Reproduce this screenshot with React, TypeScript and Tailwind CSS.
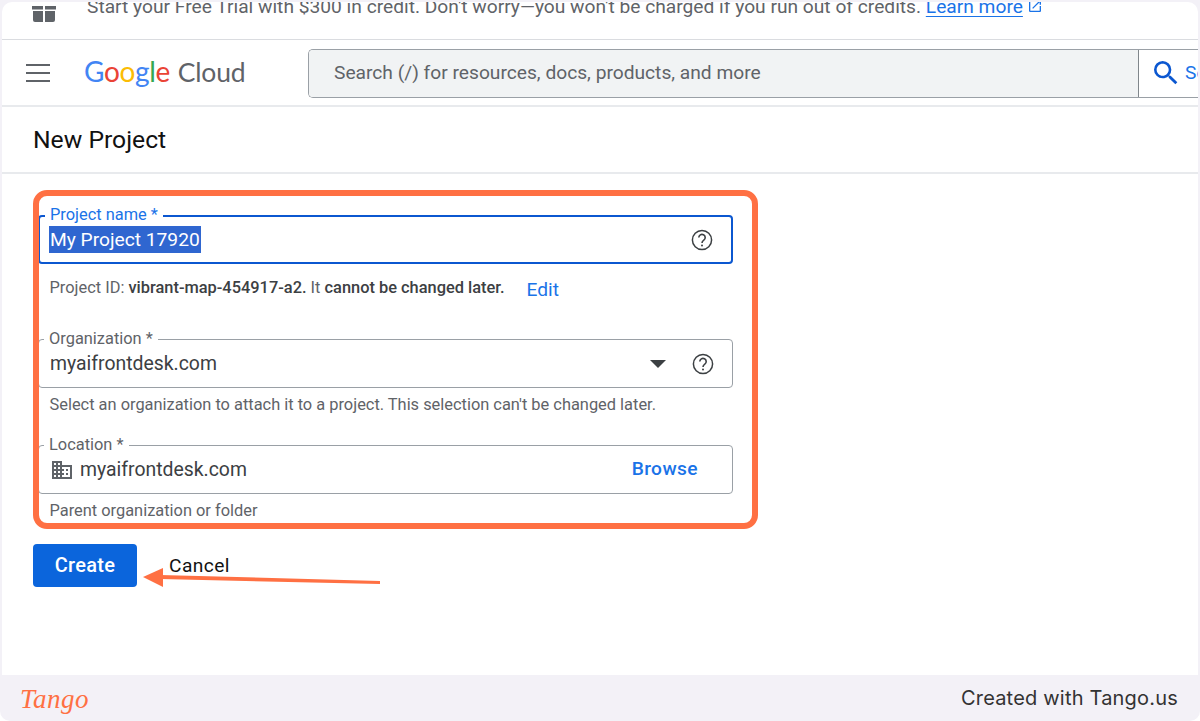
import React from "react";

function HelpIcon({ className }: { className?: string }) {
  return (
    <svg viewBox="0 0 24 24" className={className} fill="none" stroke="currentColor">
      <circle cx="12" cy="12" r="9.6" strokeWidth="1.5" />
      <path d="M8.8 9.6a3.2 3.2 0 1 1 5 2.6c-1.1.8-1.8 1.4-1.8 2.8" strokeWidth="1.6" />
      <circle cx="12" cy="17.4" r="1" fill="currentColor" stroke="none" />
    </svg>
  );
}

function Field({
  label,
  focused,
  children,
}: {
  label: string;
  focused?: boolean;
  children: React.ReactNode;
}) {
  return (
    <div
      className={`relative h-[49px] w-[695px] rounded-[4px] flex items-center pr-[17px] ${
        focused ? "border-2 border-[#0b57d0] pl-[10px]" : "border border-[#9aa0a6] pl-[11px]"
      }`}
    >
      {/* floating label sits on the outline */}
      <span
        className={`absolute left-[5px] bg-white px-[5px] text-[16.4px] leading-[18px] ${
          focused ? "top-[-11px] text-[#1a73e8]" : "top-[-10px] text-[#5f6368]"
        }`}
      >
        {label}
      </span>
      {children}
    </div>
  );
}

export default function App() {
  return (
    <div className="relative w-[1200px] h-[721px] overflow-hidden bg-white font-['Roboto',sans-serif]">
      <div className="h-full flex flex-col rounded-b-[10px] bg-[#f3f1f7] pt-[2px] px-[2px]">
        <div className="flex-1 min-h-0 bg-white rounded-t-[10px] flex flex-col overflow-hidden">
          {/* trial banner, scrolled so its top is cut off */}
          <div className="h-[38px] shrink-0 border-b border-[#dadce0] overflow-hidden pl-[30px]">
            <div className="h-[10px] flex items-center">
              <svg width="24" height="18" viewBox="0 0 24 18" className="shrink-0 mt-[16px] text-[#5f6368]" fill="currentColor">
                <rect x="0" y="0" width="11" height="3.5" />
                <rect x="13" y="0" width="11" height="3.5" />
                <path d="M1 5h10v11H3a2 2 0 0 1-2-2z" />
                <path d="M13 5h10v9a2 2 0 0 1-2 2h-8z" />
              </svg>
              <p className="ml-[31px] text-[19.2px] whitespace-nowrap text-[#5f6368]">
                Start your Free Trial with $300 in credit. Don't worry—you won't be charged if you run out of credits.{" "}
                <span className="text-[#1a73e8] underline underline-offset-[3px] decoration-1">Learn more</span>
              </p>
              <svg width="16" height="16" viewBox="0 0 24 24" className="ml-[4px] mt-[-2px] shrink-0 text-[#1a73e8]" fill="currentColor">
                <path d="M19 19H5V5h7V3H5a2 2 0 0 0-2 2v14a2 2 0 0 0 2 2h14c1.1 0 2-.9 2-2v-7h-2v7zM14 3v2h3.59l-9.83 9.83 1.41 1.41L19 6.41V10h2V3h-7z" />
              </svg>
            </div>
          </div>

          {/* top bar */}
          <div className="h-[67px] shrink-0 border-b-2 border-[#e8eaed] flex items-center pl-[24px]">
            <svg width="24" height="18" viewBox="0 0 24 18" className="shrink-0 text-[#5f6368]" fill="currentColor">
              <rect x="0" y="0" width="24" height="2" />
              <rect x="0" y="8" width="24" height="2" />
              <rect x="0" y="16" width="24" height="2" />
            </svg>
            <div className="ml-[34px] w-[224px] shrink-0 mb-[3px] flex items-baseline text-[28px] font-['Lato',sans-serif] leading-none tracking-[-0.4px]">
              <span className="text-[#4285f4]">G</span>
              <span className="text-[#ea4335]">o</span>
              <span className="text-[#fbbc05]">o</span>
              <span className="text-[#4285f4]">g</span>
              <span className="text-[#34a853]">l</span>
              <span className="text-[#ea4335]">e</span>
              <span className="ml-[8px] text-[26.5px] text-[#5f6368] tracking-[-0.2px]">Cloud</span>
            </div>
            <div className="flex-1 min-w-0 h-[49px] mt-[1px] flex border-y-[1.5px] border-l-[1.5px] border-[#9aa0a6] rounded-l-[5px]">
              <div className="w-[830px] shrink-0 bg-[#f1f3f4] border-r border-[#80868b] flex items-center pl-[25px] text-[19.2px] text-[#5f6368] rounded-l-[4px]">
                Search (/) for resources, docs, products, and more
              </div>
              <div className="flex-1 min-w-0 flex items-center pl-[11px] overflow-hidden">
                <svg width="32" height="32" viewBox="0 0 24 24" className="shrink-0 text-[#0b57d0]" fill="currentColor">
                  <path d="M15.5 14h-.79l-.28-.27A6.471 6.471 0 0 0 16 9.5 6.5 6.5 0 1 0 9.5 16c1.61 0 3.09-.59 4.23-1.57l.27.28v.79l5 4.99L20.49 19l-4.99-5zm-6 0C7.01 14 5 11.99 5 9.5S7.01 5 9.5 5 14 7.01 14 9.5 11.99 14 9.5 14z" />
                </svg>
                <span className="ml-[3px] text-[19.2px] text-[#1a73e8]">Search</span>
              </div>
            </div>
          </div>

          {/* page title */}
          <div className="h-[67px] shrink-0 border-b-2 border-[#e8eaed] flex items-center pl-[31px]">
            <h1 className="text-[24.7px] text-[#111] font-normal">New Project</h1>
          </div>

          {/* form */}
          <div className="pl-[36px] pt-[41px]">
            <Field label="Project name *" focused>
              <span className="bg-[#2f66d0] text-white text-[19.2px] leading-[27px] px-[1px] -ml-[1px]">My Project 17920</span>
              <HelpIcon className="ml-auto w-[24px] h-[24px] text-[#3c4043]" />
            </Field>
            <div className="h-[75px] flex items-start pl-[11.5px] pt-[14px] text-[#5f6368]">
              <p className="text-[16.4px] leading-[20px] whitespace-nowrap">
                Project ID: <span className="font-medium text-[#3c4043]">vibrant-map-454917-a2.</span> It{" "}
                <span className="font-medium text-[#3c4043]">cannot be changed later.</span>
              </p>
              <span className="ml-[22px] text-[19.2px] leading-[24px] text-[#1a73e8]">Edit</span>
            </div>
            <Field label="Organization *">
              <span className="text-[19.4px] text-[#3c4043]">myaifrontdesk.com</span>
              <span className="ml-auto w-0 h-0 border-x-[8px] border-x-transparent border-t-[8px] border-t-[#3c4043]" />
              <HelpIcon className="ml-[25px] w-[24px] h-[24px] text-[#3c4043]" />
            </Field>
            <div className="h-[57px] pl-[11.5px] pt-[7px] text-[16.4px] leading-[20px] text-[#5f6368]">
              Select an organization to attach it to a project. This selection can't be changed later.
            </div>
            <Field label="Location *">
              <svg width="24" height="24" viewBox="0 0 24 24" className="shrink-0 text-[#5f6368]" fill="currentColor">
                <path d="M12 7V3H2v18h20V7H12zM6 19H4v-2h2v2zm0-4H4v-2h2v2zm0-4H4V9h2v2zm0-4H4V5h2v2zm4 12H8v-2h2v2zm0-4H8v-2h2v2zm0-4H8V9h2v2zm0-4H8V5h2v2zm10 12h-8v-2h2v-2h-2v-2h2v-2h-2V9h8v10zm-2-8h-2v2h2v-2zm0 4h-2v2h2v-2z" />
              </svg>
              <span className="ml-[6px] text-[19.4px] text-[#3c4043]">myaifrontdesk.com</span>
              <span className="ml-auto mr-[17px] text-[19.2px] font-medium tracking-[0.4px] text-[#1a73e8]">Browse</span>
            </Field>
            <div className="h-[50px] pl-[11.5px] pt-[7px] text-[16.4px] leading-[20px] text-[#5f6368]">Parent organization or folder</div>
            <div className="flex items-center -ml-[5px]">
              <button className="w-[104px] h-[43px] rounded-[4px] bg-[#0b65dc] text-white text-[20px] leading-[40px] pb-[2px] tracking-[0.3px] font-medium">Create</button>
              <button className="ml-[32px] mt-[1px] text-[19.2px] text-[#111] tracking-[0.4px]">Cancel</button>
            </div>
          </div>
        </div>

        {/* tango footer */}
        <div className="h-[46px] shrink-0 flex items-center justify-between pl-[18px] pr-[20px]">
          <span className="mt-[2px] text-[27px] leading-none italic font-['Liberation_Serif',serif] text-[#ff7043] tracking-[0.5px]">Tango</span>
          <span className="text-[20px] text-[#333] font-['Inter',sans-serif] tracking-[0.2px]">Created with Tango.us</span>
        </div>
      </div>

      {/* annotation overlays */}
      <div className="absolute left-[33px] top-[190px] w-[725px] h-[339px] border-[6px] border-[#ff7043] rounded-[14px] pointer-events-none" />
      <svg className="absolute left-[140px] top-[564px] pointer-events-none" width="245" height="26" viewBox="0 0 245 26">
        <polygon points="3,13 23,4 23,23" fill="#ff7043" />
        <polygon points="20,11 240,17 240,20 20,15" fill="#ff7043" />
      </svg>
    </div>
  );
}
